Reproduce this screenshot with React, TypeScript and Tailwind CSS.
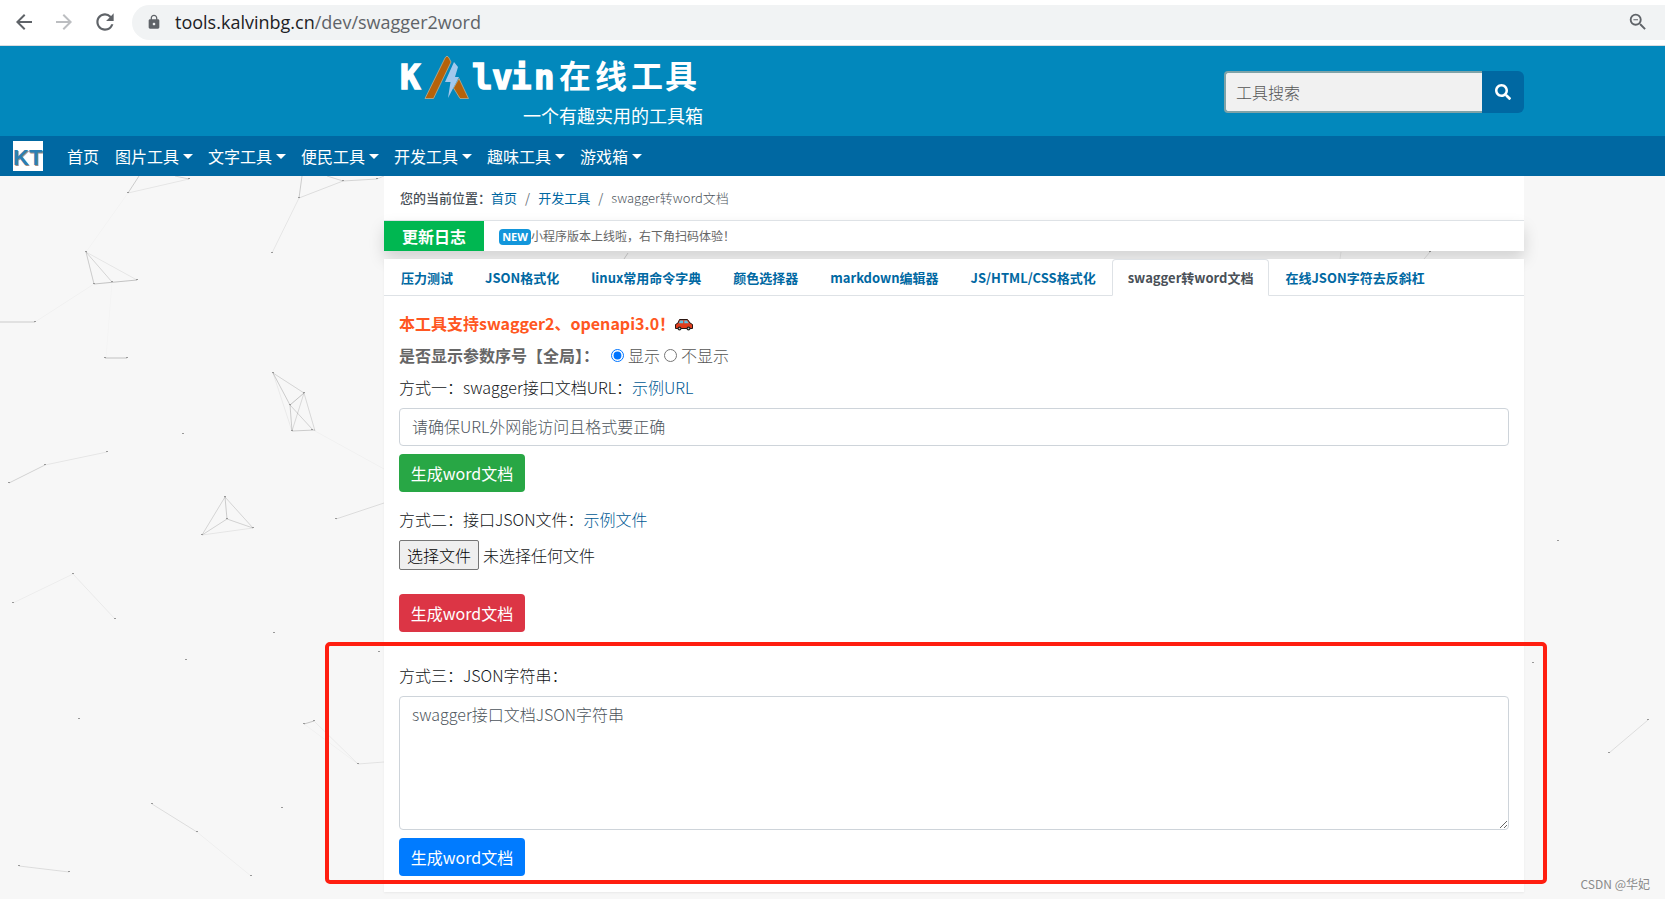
import { useRef, useState } from 'react';
import { FaSearch } from 'react-icons/fa';
import { MdArrowBack, MdArrowForward, MdLock, MdRefresh, MdZoomOut } from 'react-icons/md';

const menus = ['图片工具', '文字工具', '便民工具', '开发工具', '趣味工具', '游戏箱'];

const tabs = [
    '压力测试',
    'JSON格式化',
    'linux常用命令字典',
    '颜色选择器',
    'markdown编辑器',
    'JS/HTML/CSS格式化',
    'swagger转word文档',
    '在线JSON字符去反斜杠',
];

// x1, y1, x2, y2, opacity
const links = [
    [139, 0, 128, 17, 0.25], [128, 17, 189, 3, 0.1], [175, 0, 189, 3, 0.2], [128, 17, 86, 76, 0.03],
    [302, 0, 299, 22, 0.25], [299, 22, 343, 5, 0.15], [327, 0, 343, 5, 0.2], [343, 5, 377, 3, 0.2],
    [377, 3, 384, 0, 0.15], [299, 22, 272, 77, 0.1],
    [86, 76, 94, 108, 0.25], [86, 76, 112, 106, 0.2], [86, 76, 137, 104, 0.1], [94, 108, 137, 104, 0.3],
    [94, 108, 35, 146, 0.04], [0, 146, 35, 146, 0.25], [105, 182, 127, 182, 0.3], [112, 106, 106, 182, 0.02],
    [273, 197, 304, 217, 0.2], [273, 197, 290, 229, 0.25], [273, 197, 292, 255, 0.08], [304, 217, 290, 229, 0.3],
    [304, 217, 292, 255, 0.18], [304, 217, 315, 255, 0.18], [290, 229, 292, 255, 0.25], [290, 229, 313, 254, 0.22],
    [292, 255, 315, 254, 0.25], [315, 255, 384, 293, 0.04],
    [9, 307, 45, 289, 0.22], [45, 289, 107, 276, 0.1],
    [225, 321, 202, 359, 0.2], [225, 321, 227, 343, 0.25], [225, 321, 253, 352, 0.2], [227, 343, 202, 359, 0.22],
    [227, 343, 253, 352, 0.22], [202, 359, 253, 352, 0.1], [336, 343, 384, 327, 0.15],
    [13, 427, 73, 398, 0.06], [73, 398, 115, 443, 0.08],
    [304, 548, 314, 545, 0.3], [314, 545, 358, 588, 0.08], [304, 548, 358, 588, 0.04], [358, 588, 384, 586, 0.12],
    [152, 628, 197, 656, 0.15], [197, 656, 251, 700, 0.05], [19, 690, 69, 696, 0.15],
    [1609, 577, 1648, 544, 0.15], [624, 83, 628, 77, 0.25], [1341, 76, 1340, 83, 0.1], [1424, 83, 1430, 76, 0.15],
];

const dots = [
    [128, 17], [189, 3], [299, 22], [343, 5], [377, 3], [272, 77], [86, 76], [94, 108], [112, 106], [137, 104],
    [35, 146], [105, 182], [127, 182], [273, 197], [304, 217], [290, 229], [292, 255], [312, 254], [183, 258],
    [9, 307], [45, 289], [107, 276], [225, 321], [227, 343], [202, 359], [253, 352], [336, 343],
    [13, 427], [73, 398], [115, 443], [274, 457], [186, 484], [379, 476], [79, 543], [304, 548], [314, 545],
    [358, 588], [152, 628], [197, 656], [282, 632], [251, 700], [19, 690], [69, 696],
    [1533, 487], [1558, 365], [1609, 577], [1648, 544], [1430, 76],
];

function Particles() {
    return (
        <svg className="absolute inset-0 h-full w-full" aria-hidden="true">
            {links.map(([x1, y1, x2, y2, opacity], i) => (
                <line key={i} x1={x1} y1={y1} x2={x2} y2={y2} stroke="#000" strokeOpacity={opacity * 0.7} />
            ))}
            {dots.map(([x, y], i) => (
                <rect key={i} x={x - 1} y={y - 1} width="2" height="1" fill="#999" />
            ))}
        </svg>
    );
}

function Logo() {
    return (
        <svg width="310" height="80" viewBox="0 0 310 80" role="img" aria-label="Kalvin在线工具" className="ml-4 block">
            <g fill="#fff" stroke="#fff" strokeWidth="1.5" fontFamily="'DejaVu Sans Mono', monospace" fontWeight="700" fontSize="34">
                <text x="0" y="37">K</text>
                <text x="72 92 111 134" y="37">lvin</text>
            </g>
            <path d="M25 46.500 L45 6 Q47 2.500 49 6 L51 10 L33.500 46.500 Z" fill="#b5620a" stroke="#c9b79a" strokeWidth="0.7" />
            <path d="M59 26.500 L68.500 46.500 H60 L53.500 36 Z" fill="#b5620a" stroke="#c9b79a" strokeWidth="0.7" />
            <path d="M54 10 L58 15 L55 25 H59 L48 46 L50.500 30 H45 Z" fill="#a3c8ec" />
            <text x="159 195 231 265" y="36" fill="#fff" fontFamily="'Noto Sans CJK SC', sans-serif" fontWeight="700" fontSize="32">
                在线工具
            </text>
            <text x="123" y="71" fill="#fff" fontFamily="'Noto Sans CJK SC', sans-serif" fontWeight="400" fontSize="18">
                一个有趣实用的工具箱
            </text>
        </svg>
    );
}

function Car() {
    return (
        <svg width="18" height="12" viewBox="0 0 18 12" className="mt-1" aria-hidden="true">
            <path d="M4.500 0.500 H12.500 L15 4 L17.500 5.500 V9.500 H0.500 V5.500 L3 4 Z" fill="#e03c1c" stroke="#2b1712" />
            <path d="M5 1.500 H8.200 V4.300 H3.800 Z M9.300 1.500 H12 L13.800 4.300 H9.300 Z" fill="#5cc3e6" />
            <circle cx="4.500" cy="9.500" r="2" fill="#222" />
            <circle cx="13.500" cy="9.500" r="2" fill="#222" />
            <circle cx="4.500" cy="9.500" r="0.800" fill="#ccc" />
            <circle cx="13.500" cy="9.500" r="0.800" fill="#ccc" />
        </svg>
    );
}

function BrowserBar() {
    return (
        <div className="flex h-[46px] items-center border-b border-[#dadce0] bg-white pb-px font-normal text-[#5f6368]">
            <div className="flex w-[132px] shrink-0 items-center gap-4 pl-3">
                <button type="button" aria-label="后退"><MdArrowBack size={24} /></button>
                <button type="button" aria-label="前进" className="text-[#bcbec1]"><MdArrowForward size={24} /></button>
                <button type="button" aria-label="刷新"><MdRefresh size={26} /></button>
            </div>
            <div className="flex h-[35px] flex-1 items-center rounded-l-full bg-[#f1f3f4] pr-4 pl-[14px]">
                <MdLock size={16} />
                <p className="ml-[13px] flex-1 font-['Open_Sans',sans-serif] text-[18px] leading-6">
                    <span className="text-[#202124]">tools.kalvinbg.cn</span>/dev/swagger2word
                </p>
                <MdZoomOut size={22} />
            </div>
        </div>
    );
}

function SubmitButton({ className }: { className: string }) {
    return (
        <button type="button" className={`mt-2 block h-[38px] w-[126px] rounded pb-px text-center font-normal text-white ${className}`}>
            生成word文档
        </button>
    );
}

export default function App() {
    const [showIndex, setShowIndex] = useState(true);
    const [fileName, setFileName] = useState('');
    const fileRef = useRef<HTMLInputElement>(null);

    return (
        <div className="flex min-h-screen flex-col bg-[#f7f7f7] font-['Noto_Sans_CJK_SC',sans-serif] text-base leading-6 font-light text-[#111417]">
            <BrowserBar />

            <header className="flex h-[90px] items-center justify-between bg-[#0288bc] pt-0.5 pr-[141px] pl-[384px]">
                <a href="#"><Logo /></a>
                <form className="flex h-[42px] w-[300px]" onSubmit={(e) => e.preventDefault()}>
                    <input
                        type="text"
                        aria-label="工具搜索"
                        placeholder="工具搜索"
                        className="w-[258px] rounded-l border-2 border-r-0 border-[#7fa3a8] bg-[#f1f1f1] px-[10px] placeholder:text-[#555]"
                    />
                    <button type="submit" aria-label="搜索" className="flex flex-1 items-center justify-center rounded-r-md bg-[#0068a2] text-white">
                        <FaSearch size={16} />
                    </button>
                </form>
            </header>

            <nav className="flex h-10 items-center bg-[#0068a2] pl-[13px] font-normal text-white">
                <a href="#" aria-label="KT" className="mr-4 flex size-[30px] items-center justify-center bg-white">
                    <svg width="30" height="30" viewBox="0 0 30 30" aria-hidden="true">
                        <g fontFamily="'Liberation Sans', sans-serif" fontWeight="700" fontSize="22">
                            <text x="1" y="25" fill="#a08d84">KT</text>
                            <text x="0" y="24" fill="#2b7fb3">KT</text>
                        </g>
                    </svg>
                </a>
                <a href="#" className="px-2">首页</a>
                {menus.map((m) => (
                    <button key={m} type="button" className="flex items-center gap-1 pr-[7px] pl-2">
                        {m}
                        <span className="border-x-[5px] border-t-[5px] border-x-transparent border-t-white" />
                    </button>
                ))}
            </nav>

            <div className="relative flex-1 overflow-hidden pr-[141px] pb-[7px] pl-[384px]">
                <Particles />

                <div className="relative">
                    <ol className="flex h-11 items-center bg-white pl-4 text-[13px] font-normal text-[#6c757d]">
                        <li className="font-medium text-[#495057]">您的当前位置：</li>
                        <li><a href="#" className="text-[#0068a2]">首页</a></li>
                        <li className="px-2">/</li>
                        <li><a href="#" className="text-[#0068a2]">开发工具</a></li>
                        <li className="px-2">/</li>
                        <li className="font-light text-[#4d555c]">swagger转word文档</li>
                    </ol>

                    <div className="flex h-[31px] items-stretch border-t border-[#dee2e6] bg-white shadow-[0_8px_16px_rgba(0,0,0,0.15)]">
                        <strong className="flex w-[100px] items-center justify-center bg-[#00b751] font-bold text-white">更新日志</strong>
                        <p className="flex items-center pl-[15px] text-xs font-normal text-[#666]">
                            <span className="mt-0.5 flex h-4 w-8 items-center justify-center rounded bg-[#1296db] font-['Open_Sans',sans-serif] text-[11px] font-bold text-white">NEW</span>
                            小程序版本上线啦，右下角扫码体验！
                        </p>
                    </div>

                    <main className="relative mt-2 bg-white shadow-[0_1px_2px_rgba(0,0,0,0.06)]">
                        <div role="tablist" className="flex h-[37px] border-b border-[#dee2e6] pl-px text-[13px] font-bold whitespace-nowrap">
                            {tabs.map((t) => (
                                <button
                                    key={t}
                                    type="button"
                                    role="tab"
                                    aria-selected={t === 'swagger转word文档'}
                                    className="-mb-px rounded-t border border-transparent px-[15px] text-[#0068a2] aria-selected:border-[#dee2e6] aria-selected:border-b-white aria-selected:bg-white aria-selected:text-[#495057]"
                                >
                                    {t}
                                </button>
                            ))}
                        </div>

                        <section className="px-[15px] pt-[11px]">
                            <p className="flex h-8 items-center font-bold text-[#ff5722]">
                                本工具支持swagger2、openapi3.0！<Car />
                            </p>
                            <fieldset className="flex h-8 items-center text-[#555]">
                                <legend className="float-left mr-3 font-bold text-[#666]">是否显示参数序号【全局】：</legend>
                                <input id="show" type="radio" name="index" className="mr-1" checked={showIndex} onChange={() => setShowIndex(true)} />
                                <label htmlFor="show" className="mr-1">显示</label>
                                <input id="hide" type="radio" name="index" className="mr-1" checked={!showIndex} onChange={() => setShowIndex(false)} />
                                <label htmlFor="hide">不显示</label>
                            </fieldset>
                            <div className="flex h-8 items-center">
                                <label htmlFor="url">方式一：swagger接口文档URL：</label>
                                <a href="#" className="text-[#005a94]">示例URL</a>
                            </div>
                            <input
                                id="url"
                                type="text"
                                placeholder="请确保URL外网能访问且格式要正确"
                                className="mt-[5px] block h-[38px] w-full rounded border border-[#ced4da] px-3 pb-0.5 placeholder:text-[#4d555c]"
                            />
                            <SubmitButton className="bg-[#28a745]" />
                        </section>

                        <section className="mt-[11px] px-[15px]">
                            <div className="flex h-8 items-center">
                                <label htmlFor="file">方式二：接口JSON文件：</label>
                                <a href="#" className="text-[#005a94]">示例文件</a>
                            </div>
                            <div className="mt-[5px] mb-6 flex h-[30px] items-center gap-1">
                                <input
                                    id="file"
                                    ref={fileRef}
                                    type="file"
                                    className="hidden"
                                    onChange={(e) => setFileName(e.target.files?.[0]?.name ?? '')}
                                />
                                <button
                                    type="button"
                                    onClick={() => fileRef.current?.click()}
                                    className="h-[30px] w-20 rounded-xs border border-[#767676] bg-[#efefef] text-black"
                                >
                                    选择文件
                                </button>
                                <span>{fileName || '未选择任何文件'}</span>
                            </div>
                            <SubmitButton className="bg-[#dc3545]" />
                        </section>

                        <section className="relative px-[15px] pt-[27px] pb-4">
                            <label htmlFor="json" className="flex h-8 items-center">方式三：JSON字符串：</label>
                            <textarea
                                id="json"
                                placeholder="swagger接口文档JSON字符串"
                                className="mt-[5px] block h-[134px] w-full rounded border border-[#ced4da] px-3 py-[5px] placeholder:text-[#4d555c]"
                            />
                            <SubmitButton className="bg-[#007bff]" />
                            {/* highlight frame around method three */}
                            <div className="pointer-events-none absolute top-[10px] -right-[23px] bottom-2 -left-[59px] rounded-[5px] border-4 border-[#ff1e10]" />
                        </section>
                    </main>
                </div>

                <p className="absolute right-[15px] bottom-[6px] text-xs leading-[18px] font-normal text-[#8a8a8a]">CSDN @华妃</p>
            </div>
        </div>
    );
}
